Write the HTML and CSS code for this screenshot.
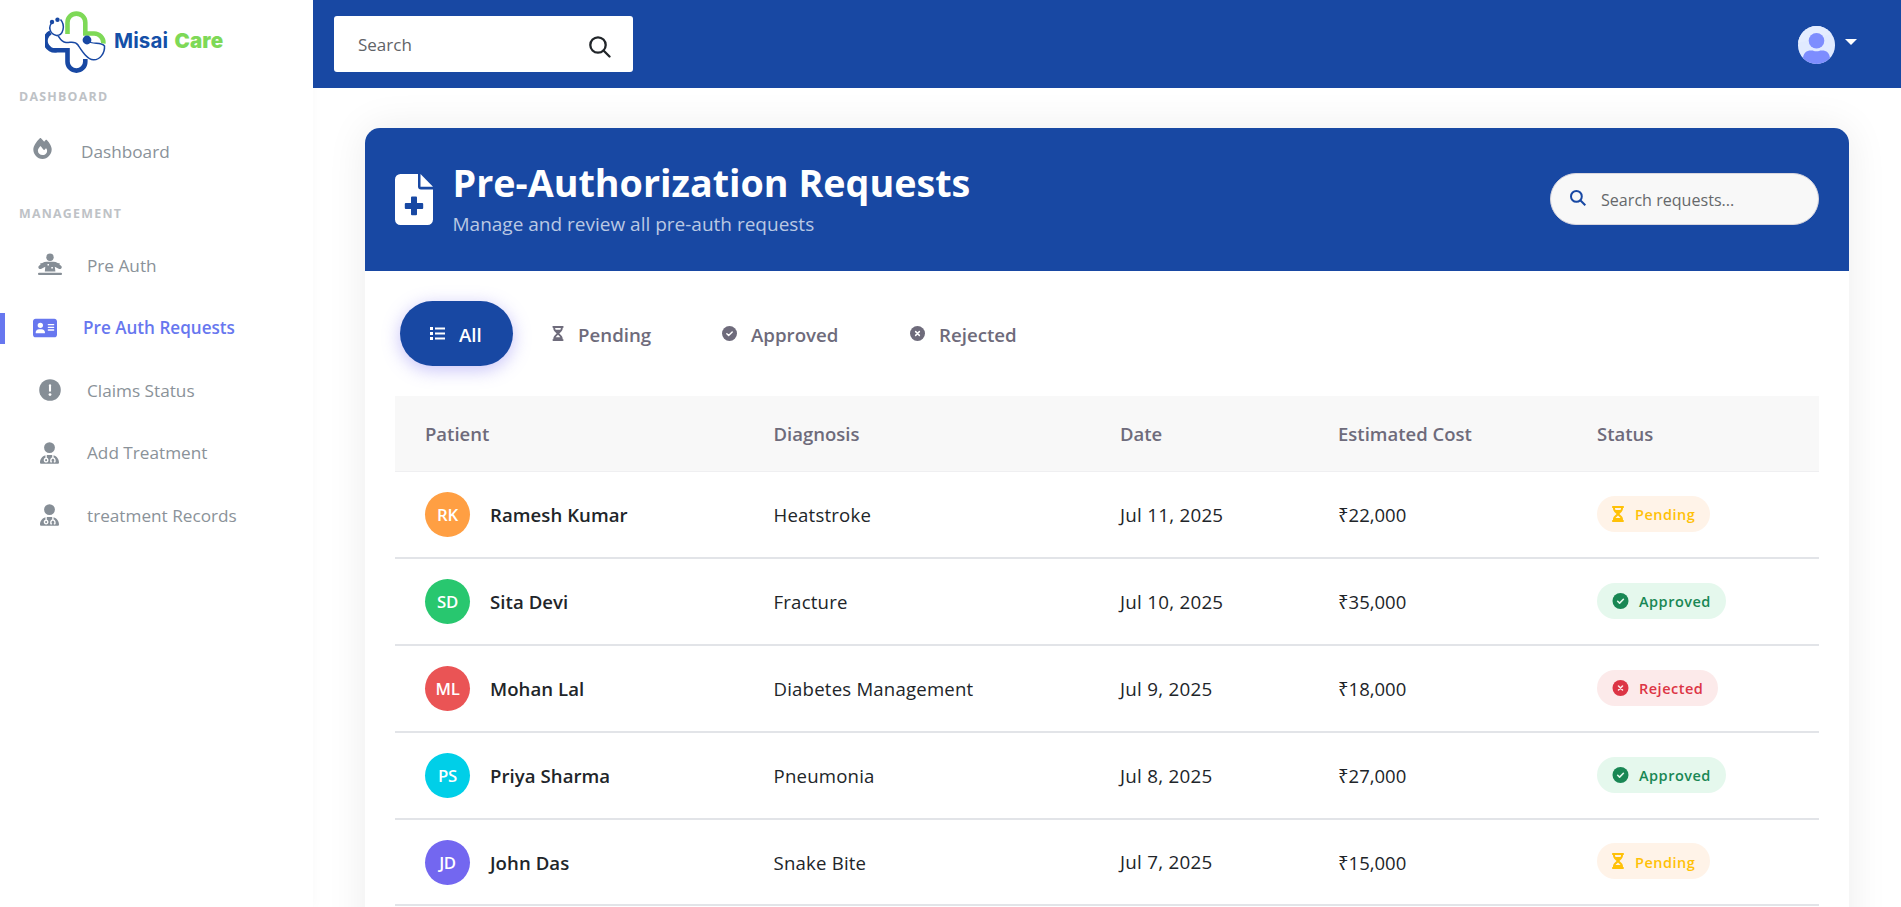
FILE: index.html
```html
<!DOCTYPE html>
<html lang="en">
<head>
<meta charset="utf-8">
<title>Misai Care - Pre-Authorization Requests</title>
<link rel="stylesheet" href="styles.css">
</head>
<body>
<svg class="sprite" aria-hidden="true">
  <symbol id="hourglass" viewBox="0 0 384 512"><path fill-rule="evenodd" d="M0 32C0 14.300 14.300 0 32 0H352c17.700 0 32 14.300 32 32s-14.300 32-32 32V75c0 42.400-16.900 83.100-46.900 113.100L237.300 256l67.900 67.900c30 30 46.900 70.700 46.900 113.100v11c17.700 0 32 14.300 32 32s-14.300 32-32 32H32c-17.700 0-32-14.300-32-32s14.300-32 32-32V437c0-42.400 16.900-83.100 46.900-113.100L146.700 256 78.900 188.100C48.900 158.100 32 117.400 32 75V64C14.300 64 0 49.700 0 32zM96 64v11c0 19 5.600 37.400 16 53h160c10.300-15.600 16-34 16-53V64zM112 384h160c-3.500-5.300-7.600-10.300-12.100-14.900L192 301.300l-67.900 67.900c-4.600 4.600-8.600 9.600-12.100 14.800z"/></symbol>
  <symbol id="check" viewBox="0 0 512 512"><circle cx="256" cy="256" r="256"/><path d="M165 264l62 60 122-122" fill="none" stroke="var(--mark)" stroke-width="50" stroke-linecap="round" stroke-linejoin="round"/></symbol>
  <symbol id="cross" viewBox="0 0 512 512"><circle cx="256" cy="256" r="256"/><path d="M192 192l128 128M320 192L192 320" fill="none" stroke="var(--mark)" stroke-width="50" stroke-linecap="round"/></symbol>
  <symbol id="doctor" viewBox="0 0 448 512"><path fill-rule="evenodd" d="M224 256a128 128 0 1 0 0-256 128 128 0 1 0 0 256zm-96 55.200C54 332.900 0 401.300 0 482.300C0 498.700 13.300 512 29.700 512H418.300c16.400 0 29.700-13.300 29.700-29.700c0-81-54-149.400-128-171.100V362c27.600 7.100 48 32.200 48 62v40c0 8.800-7.200 16-16 16H336c-8.800 0-16-7.200-16-16s7.200-16 16-16V424c0-17.700-14.300-32-32-32s-32 14.300-32 32v24c8.800 0 16 7.200 16 16s-7.200 16-16 16H256c-8.800 0-16-7.200-16-16V424c0-29.800 20.400-54.900 48-62V304.900c-6-.6-12.100-.9-18.300-.9H178.300c-6.200 0-12.300 .3-18.300 .9v65.400c23.100 6.900 40 28.300 40 53.700c0 30.900-25.100 56-56 56s-56-25.100-56-56c0-25.400 16.900-46.800 40-53.700V311.200zM144 448a24 24 0 1 0 0-48 24 24 0 1 0 0 48z"/></symbol>
</svg>
<div class="app">
  <aside class="sidebar">
    <div class="brand">
      <svg class="brand-mark" viewBox="0 0 62 63" fill="none">
        <path d="M22.500 24V12.500a8.900 8.900 0 0 1 17.800 0V23.500h8.500a9.300 9.300 0 0 1 9.600 10" stroke="#7ed957" stroke-width="4.600"/>
        <path d="M5.500 22.500a9.500 9.500 0 0 0 6.300 17.700H22.500v11.500a8.900 8.900 0 0 0 17.800 0V49" stroke="#1848a3" stroke-width="4.600"/>
        <path d="M8 12C2.500 16 4.500 24 11.500 25.500 18.500 25.500 20.500 15 15.500 9.500M13 25.500c2 3 3 6.500 8 7 5 .3 9-2 12 2.500 4 6 9 14.500 15.500 14.800C55 50 60 43 59.500 36 56 31.500 48 35 42 31" stroke="#1848a3" stroke-width="1.500"/>
        <circle cx="7" cy="12" r="2.200" fill="#1848a3"/><circle cx="12.500" cy="9.800" r="2.200" fill="#1848a3"/><circle cx="42" cy="30" r="4.400" fill="#1848a3"/>
      </svg>
      <span class="brand-name">Misai <b>Care</b></span>
    </div>
    <div class="nav-title">DASHBOARD</div>
    <a class="nav-item nav-home">
      <svg class="nav-icon flame" viewBox="0 0 448 512"><path fill-rule="evenodd" d="M159.300 5.400c7.800-7.300 19.900-7.200 27.700 .1c27.600 25.900 53.500 53.800 77.700 84c11-14.400 23.500-30.100 37-42.900c7.900-7.400 20.100-7.400 28 .1c34.600 33 63.900 76.600 84.500 118c20.300 40.800 33.800 82.500 33.800 111.900C448 404.200 348.200 512 224 512C98.400 512 0 404.100 0 276.500c0-38.400 17.800-85.300 45.400-131.700C73.300 97.700 112.700 48.600 159.300 5.400zM225.700 416c25.300 0 47.700-7 68.800-21c42.100-29.400 53.400-88.200 28.100-134.400c-4.500-9-16-9.600-22.500-2l-25.200 29.300c-6.600 7.600-18.500 7.400-24.700-.5c-16.500-21-46-58.500-62.800-79.800c-6.300-8-18.300-8.100-24.700-.1c-33.800 42.500-50.800 69.300-50.800 99.400C112 375.400 162.600 416 225.700 416z"/></svg>
      <span>Dashboard</span>
    </a>
    <div class="nav-title second">MANAGEMENT</div>
    <a class="nav-item">
      <svg class="nav-icon" viewBox="0 0 24 24"><circle cx="12" cy="4.300" r="3.700"/><path fill-rule="evenodd" d="M8.500 8.800h7c3 0 5.500 1.800 8 4.500.9 1.700-.8 3.200-2.400 2.600l-4.300-2.200.6 4.800H6.800l.5-4.800L3 15.900c-1.700.6-3.300-1-2.400-2.600C3 10.600 5.500 8.800 8.500 8.800zM9.500 11v1.500H11V11zM13.300 14v1.600h1.600V14z"/><rect x="2.200" y="10.200" width="2.500" height="1" rx=".5"/><rect x="19.300" y="10.200" width="2.500" height="1" rx=".5"/><rect x="0" y="19.800" width="24" height="2.200" rx="1"/></svg>
      <span>Pre Auth</span>
    </a>
    <a class="nav-item active">
      <svg class="nav-icon" viewBox="0 0 576 512"><path fill-rule="evenodd" d="M64 32C28.700 32 0 60.700 0 96V416c0 35.300 28.700 64 64 64H512c35.300 0 64-28.700 64-64V96c0-35.300-28.700-64-64-64H64zm80 256h64c44.200 0 80 35.800 80 80c0 8.800-7.200 16-16 16H80c-8.800 0-16-7.200-16-16c0-44.200 35.800-80 80-80zm-32-96a64 64 0 1 1 128 0 64 64 0 1 1-128 0zm256-32H496c8.800 0 16 7.200 16 16s-7.200 16-16 16H368c-8.800 0-16-7.200-16-16s7.200-16 16-16zm0 64H496c8.800 0 16 7.200 16 16s-7.200 16-16 16H368c-8.800 0-16-7.200-16-16s7.200-16 16-16zm0 64H496c8.800 0 16 7.200 16 16s-7.200 16-16 16H368c-8.800 0-16-7.200-16-16s7.200-16 16-16z"/></svg>
      <span>Pre Auth Requests</span>
    </a>
    <a class="nav-item">
      <svg class="nav-icon" viewBox="0 0 24 24"><circle cx="12" cy="12" r="10.800"/><path d="M12 7.300v5.500" stroke="#fff" stroke-width="2.100" stroke-linecap="round"/><circle cx="12" cy="16.600" r="1.400" fill="#fff"/></svg>
      <span>Claims Status</span>
    </a>
    <a class="nav-item"><svg class="nav-icon person"><use href="#doctor"/></svg><span>Add Treatment</span></a>
    <a class="nav-item"><svg class="nav-icon person"><use href="#doctor"/></svg><span>treatment Records</span></a>
  </aside>
  <div class="main">
    <header class="topbar">
      <div class="top-search">
        <span>Search</span>
        <svg viewBox="0 0 22 22" fill="none" stroke="#212529" stroke-width="2.300" stroke-linecap="round"><circle cx="9" cy="9" r="7.700"/><path d="M14.500 14.500l6 6"/></svg>
      </div>
      <div class="user">
        <svg class="user-pic" viewBox="0 0 37 38"><defs><clipPath id="round"><rect width="37" height="38" rx="18.500"/></clipPath></defs><g clip-path="url(#round)"><rect width="37" height="38" fill="#e0eaff"/><path d="M0 17L37 7V0H0z" fill="#e4edff"/><circle cx="18.500" cy="14.700" r="7.800" fill="#7d8dfe"/><path d="M5 33c0-6 3.500-8.500 8-8.500 3 0 3 .8 5.500.8s2.500-.8 5.500-.8c4.500 0 8 2.500 8 8.500v6H5z" fill="#7d8dfe"/></g></svg>
        <span class="caret"></span>
      </div>
    </header>
    <main class="content">
      <section class="card">
        <div class="card-head">
          <svg class="file-icon" viewBox="0 0 38 51"><path fill="#fff" fill-rule="evenodd" d="M5.500 0H23V12.500a3 3 0 0 0 3 3H38V45.500A5.500 5.500 0 0 1 32.500 51h-27A5.500 5.500 0 0 1 0 45.500v-40A5.500 5.500 0 0 1 5.500 0zM17 22.500a1 1 0 0 0-1 1V29H10.800a1 1 0 0 0-1 1v4a1 1 0 0 0 1 1h5.200v5.200a1 1 0 0 0 1 1h4a1 1 0 0 0 1-1V35h5.200a1 1 0 0 0 1-1v-4a1 1 0 0 0-1-1h-5.200v-5.500a1 1 0 0 0-1-1z"/><path fill="#fff" d="M25.500 0L38 12.800H25.500z"/></svg>
          <div class="heading"><h1>Pre-Authorization Requests</h1><p>Manage and review all pre-auth requests</p></div>
          <div class="req-search">
            <svg viewBox="0 0 16 16" fill="none" stroke="#1848a3" stroke-width="2"><circle cx="6.400" cy="6.400" r="5.400"/><path d="M10.300 10.300l5 5"/></svg>
            <span>Search requests...</span>
          </div>
        </div>
        <div class="card-body">
          <nav class="tabs">
            <a class="tab on"><svg class="list" viewBox="0 0 15 13" fill="#fff"><path d="M0 0h3v3H0zM0 5h3v3H0zM0 10h3v3H0zM5 .5h10v2H5zM5 5.500h10v2H5zM5 10.500h10v2H5z"/></svg><span>All</span></a>
            <a class="tab pend"><svg class="glass"><use href="#hourglass"/></svg><span>Pending</span></a>
            <a class="tab appr"><svg><use href="#check"/></svg><span>Approved</span></a>
            <a class="tab rej"><svg><use href="#cross"/></svg><span>Rejected</span></a>
          </nav>
          <div class="table">
            <div class="row head"><span>Patient</span><span>Diagnosis</span><span>Date</span><span>Estimated Cost</span><span>Status</span></div>
            <div class="row"><div class="patient"><i class="avatar orange">RK</i><b>Ramesh Kumar</b></div><span>Heatstroke</span><span class="date">Jul 11, 2025</span><span class="cost">₹22,000</span><div class="state"><em class="badge pending"><svg class="glass"><use href="#hourglass"/></svg><span>Pending</span></em></div></div>
            <div class="row"><div class="patient"><i class="avatar green">SD</i><b>Sita Devi</b></div><span>Fracture</span><span class="date">Jul 10, 2025</span><span class="cost">₹35,000</span><div class="state"><em class="badge approved"><svg><use href="#check"/></svg><span>Approved</span></em></div></div>
            <div class="row"><div class="patient"><i class="avatar red">ML</i><b>Mohan Lal</b></div><span>Diabetes Management</span><span class="date">Jul 9, 2025</span><span class="cost">₹18,000</span><div class="state"><em class="badge rejected"><svg><use href="#cross"/></svg><span>Rejected</span></em></div></div>
            <div class="row"><div class="patient"><i class="avatar cyan">PS</i><b>Priya Sharma</b></div><span>Pneumonia</span><span class="date">Jul 8, 2025</span><span class="cost">₹27,000</span><div class="state"><em class="badge approved"><svg><use href="#check"/></svg><span>Approved</span></em></div></div>
            <div class="row"><div class="patient"><i class="avatar violet">JD</i><b>John Das</b></div><span>Snake Bite</span><span class="date">Jul 7, 2025</span><span class="cost">₹15,000</span><div class="state"><em class="badge pending"><svg class="glass"><use href="#hourglass"/></svg><span>Pending</span></em></div></div>
          </div>
        </div>
      </section>
    </main>
  </div>
</div>
</body>
</html>
```

FILE: styles.css
```css
* { box-sizing: border-box; }
body {
  margin: 0;
  height: 907px;
  overflow: hidden;
  background: #fff;
  color: #212529;
  font-family: "Open Sans", "Noto Sans", sans-serif;
}
svg { display: block; flex: none; }
.sprite { display: none; }
.app { display: flex; height: 907px; }

.sidebar {
  width: 313px;
  flex: none;
  background: #fff;
  box-shadow: 0 0 12px rgba(0, 0, 0, .03);
}
.brand { display: flex; align-items: center; height: 83px; padding: 0 0 1px 45px; }
.brand-mark { width: 62px; height: 63px; margin-right: 7px; }
.brand-name {
  font: 700 20.500px/30px Inter, sans-serif;
  color: #1450a8;
  letter-spacing: .1px;
  word-spacing: 1.500px;
  white-space: nowrap;
}
.brand-name b { color: #7ed957; }
.nav-title {
  height: 26px;
  padding-left: 19px;
  color: #bec2c6;
  font-size: 12.400px;
  font-weight: 700;
  line-height: 27px;
  letter-spacing: 1.250px;
}
.nav-title.second { height: 38px; line-height: 40px; margin-bottom: 2px; }
.nav-item {
  position: relative;
  display: flex;
  align-items: center;
  height: 62.500px;
  padding-left: 38px;
  color: #8a9299;
  font-size: 17.200px;
  white-space: nowrap;
}
.nav-icon { width: 24px; height: 24px; margin-right: 25px; fill: #868e96; }
.nav-icon.person { width: 19px; height: 22px; margin: 0 28px 0 2px; }
.nav-home { height: 85px; padding: 0 0 1px 33px; }
.nav-icon.flame { width: 19px; height: 21px; margin: 0 29px 6px 0; }
.nav-item.active { padding-left: 33px; color: #6777ef; font-weight: 600; font-size: 17.100px; }
.nav-item.active .nav-icon { fill: #6777ef; margin-right: 26px; }
.nav-item.active::before {
  content: "";
  position: absolute;
  left: 0;
  top: 16px;
  width: 5px;
  height: 31px;
  background: #6777ef;
}

.main { flex: 1; min-width: 0; }
.topbar {
  display: flex;
  align-items: center;
  justify-content: space-between;
  height: 88px;
  padding: 0 44px 0 21px;
  background: #1848a3;
}
.top-search {
  display: flex;
  align-items: center;
  justify-content: space-between;
  width: 299px;
  height: 56px;
  padding: 0 22px 0 24px;
  border-radius: 3px;
  background: #fff;
  color: #5f6367;
  font-size: 17px;
}
.top-search svg { width: 22px; height: 22px; margin-top: 5px; }
.user { display: flex; align-items: center; gap: 10px; }
.user-pic { width: 37px; height: 38px; margin-top: 2px; }
.caret { border: 6px solid transparent; border-top-color: #fff; border-bottom: 0; margin-top: -4px; }

.content { height: 819px; padding: 40px 52px 0; overflow: hidden; }
.card {
  height: 840px;
  border-radius: 15px;
  background: #fff;
  box-shadow: 0 0 40px rgba(0, 0, 0, .08);
}
.card-head {
  display: flex;
  align-items: center;
  height: 143px;
  padding: 0 30px 2px 29.500px;
  border-radius: 15px 15px 0 0;
  background: #1848a3;
  color: #fff;
}
.file-icon { width: 38px; height: 51px; margin: 1px 20px 0 0; }
.heading { flex: 1; white-space: nowrap; }
h1 { margin: 1px 0 0; font-size: 37.700px; line-height: 46px; font-weight: 700; }
.heading p { margin: 4px 0 0; font-size: 19px; line-height: 28px; color: #bac8e3; }
.req-search {
  display: flex;
  align-items: center;
  gap: 15px;
  width: 269px;
  height: 52px;
  padding-left: 19px;
  border: 1px solid #d8d6de;
  border-radius: 26px;
  background: #f8f8f8;
  color: #66686b;
  font-size: 16.100px;
}
.req-search svg { width: 16px; height: 16px; margin-bottom: 2px; }
.req-search span { margin-top: 3px; }

.card-body { padding: 30px 30px 0; }
.tabs { display: flex; height: 65px; padding-left: 5px; margin-bottom: 30px; }
.tab {
  --mark: #fff;
  display: flex;
  align-items: center;
  color: #6e6b7b;
  font-size: 18.700px;
  font-weight: 600;
  white-space: nowrap;
}
.tab span { margin-top: 2px; }
.tab svg { width: 15px; height: 15px; margin: 0 14px 1px 0; fill: #6e6b7b; }
.tab svg.list { height: 13px; fill: #fff; }
.tab svg.glass { width: 12px; }
.tab.on {
  width: 113px;
  padding-left: 30px;
  border-radius: 33px;
  background: #1848a3;
  color: #fff;
  box-shadow: 0 4px 18px rgba(115, 103, 240, .4);
}
.tab.pend { width: 169px; padding-left: 39px; }
.tab.appr { width: 188px; padding-left: 40px; }
.tab.rej { padding-left: 40px; }

.row {
  display: grid;
  grid-template-columns: 348.500px 346.500px 218px 259px 1fr;
  align-items: center;
  height: 87px;
  padding-left: 30px;
  border-bottom: 2px solid #e2e4e8;
  font-size: 18.600px;
  letter-spacing: .2px;
  white-space: nowrap;
}
.row.head {
  height: 76px;
  border-bottom: 1px solid #efeff1;
  background: #f8f8f8;
  color: #6e6b7b;
  font-size: 18.500px;
  font-weight: 600;
  letter-spacing: 0;
}
.row:last-child { height: 86px; }
.row .date { font-size: 18.800px; letter-spacing: .25px; }
.row .cost { font-size: 18.500px; letter-spacing: 0; }
.patient { display: flex; align-items: center; gap: 20px; }
.patient b { font-weight: 600; letter-spacing: .05px; }
.avatar {
  display: flex;
  align-items: center;
  justify-content: center;
  width: 45px;
  height: 45px;
  border-radius: 50%;
  color: #fff;
  font-size: 16.800px;
  font-style: normal;
  font-weight: 600;
  letter-spacing: -.3px;
}
.orange { background: #ff9f43; }
.green { background: #28c76f; }
.red { background: #ea5455; }
.cyan { background: #00cfe8; }
.violet { background: #7367f0; }
.state { padding-bottom: 2px; }
.badge {
  display: inline-flex;
  align-items: center;
  height: 36px;
  padding: 0 15px;
  border-radius: 18px;
  font-size: 14.500px;
  font-style: normal;
  font-weight: 600;
  letter-spacing: .5px;
  vertical-align: middle;
}
.badge span { margin-top: 2px; }
.badge svg { width: 17px; height: 16px; margin-right: 10px; fill: currentColor; }
.badge svg.glass { width: 12px; margin-right: 11px; }
.pending { background: #fff3e8; color: #ffc107; }
.approved { --mark: #e5f8ed; background: #e5f8ed; color: #198754; }
.rejected { --mark: #fceaea; background: #fceaea; color: #dc3545; }
```
